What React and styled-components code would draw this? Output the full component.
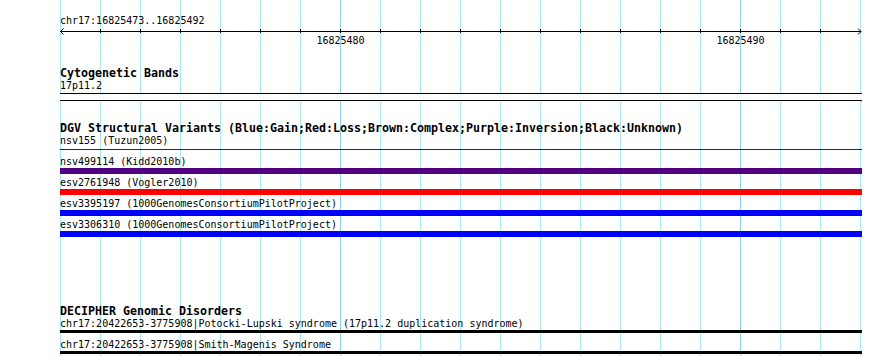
import React from 'react'
import styled, { createGlobalStyle } from 'styled-components'

const GlobalStyle = createGlobalStyle`
  html, body {
    margin: 0;
    padding: 0;
    background: #ffffff;
  }
  body {
    font-family: 'DejaVu Sans Mono', 'Liberation Mono', monospace;
    color: #000000;
  }
`

const GRID = '#a8e8f0'
const GRID_DARK = '#88d2ee'

const Page = styled.div`
  display: flex;
  width: 890px;
  height: 356px;
  padding-left: 60px;
  box-sizing: border-box;
  overflow: hidden;
`

const Tracks = styled.div`
  width: 802px;
  height: 356px;
  display: flex;
  flex-direction: column;
  overflow: hidden;
  background-color: #ffffff;
  background-image:
    linear-gradient(to right, transparent 280px, ${GRID_DARK} 280px, ${GRID_DARK} 281px, transparent 281px),
    linear-gradient(to right, transparent 680px, ${GRID_DARK} 680px, ${GRID_DARK} 681px, transparent 681px),
    repeating-linear-gradient(to right, ${GRID} 0, ${GRID} 1px, transparent 1px, transparent 40px);
  background-size: 802px 100%, 802px 100%, 801px 100%;
  background-repeat: no-repeat;

  & > * {
    flex-shrink: 0;
  }
`

const PositionLabel = styled.div`
  margin-top: 15px;
  height: 12px;
  font-size: 10px;
  line-height: 12px;
  white-space: pre;
`

const RulerSvg = styled.svg`
  display: block;
  width: 802px;
  height: 8px;
`

const TickLabels = styled.div`
  position: relative;
  height: 12px;
`

const TickLabel = styled.span`
  position: absolute;
  top: 0;
  transform: translateX(-50%);
  font-size: 10px;
  line-height: 12px;
  white-space: pre;
`

const TrackTitle = styled.div`
  margin-top: ${({ $top }) => $top}px;
  height: 13px;
  font-size: 11.63px;
  font-weight: 700;
  line-height: 13px;
  white-space: pre;
`

const ItemLabel = styled.div`
  height: 12px;
  font-size: 10px;
  line-height: 12px;
  white-space: pre;
`

const Band = styled.div`
  margin-top: 1px;
  height: 6px;
  background: #ffffff;
  border-top: 1px solid #000000;
  border-bottom: 1px solid #000000;
`

const ItemRow = styled.div`
  display: flex;
  flex-direction: column;
  height: 21px;
`

const ItemBar = styled.div`
  height: ${({ $h }) => $h}px;
  margin-top: ${({ $mt }) => $mt || 0}px;
  background: ${({ $color }) => $color};
`

const ticks = Array.from({ length: 19 }, (_, i) => (i + 1) * 40)

function Ruler() {
  return (
    <RulerSvg width="802" height="8" viewBox="0 0 802 8">
      <line x1="0.5" y1="4.5" x2="801" y2="4.5" stroke="#000" strokeWidth="1" />
      {ticks.map((x) => (
        <line key={x} x1={x + 0.5} y1="2" x2={x + 0.5} y2="6" stroke="#000" strokeWidth="1" />
      ))}
      <polyline points="3.5,1.5 0.5,4.5 3.5,7.5" fill="none" stroke="#000" strokeWidth="1" />
      <polyline points="798,1.5 801,4.5 798,7.5" fill="none" stroke="#000" strokeWidth="1" />
    </RulerSvg>
  )
}

const dgvItems = [
  { name: 'nsv155 (Tuzun2005)', color: '#4a0a78', h: 1, mt: 2 },
  { name: 'nsv499114 (Kidd2010b)', color: '#500080', h: 6 },
  { name: 'esv2761948 (Vogler2010)', color: '#ff0000', h: 6 },
  { name: 'esv3395197 (1000GenomesConsortiumPilotProject)', color: '#0000ff', h: 6 },
  { name: 'esv3306310 (1000GenomesConsortiumPilotProject)', color: '#0000ff', h: 6 },
]

const decipherItems = [
  'chr17:20422653-3775908|Potocki-Lupski syndrome (17p11.2 duplication syndrome)',
  'chr17:20422653-3775908|Smith-Magenis Syndrome',
]

export default function App() {
  return (
    <>
      <GlobalStyle />
      <Page>
        <Tracks>
          <PositionLabel>chr17:16825473..16825492</PositionLabel>
          <Ruler />
          <TickLabels>
            <TickLabel style={{ left: 280.5 }}>16825480</TickLabel>
            <TickLabel style={{ left: 680.5 }}>16825490</TickLabel>
          </TickLabels>

          <TrackTitle $top={20}>Cytogenetic Bands</TrackTitle>
          <ItemLabel>17p11.2</ItemLabel>
          <Band />

          <TrackTitle $top={21}>
            DGV Structural Variants (Blue:Gain;Red:Loss;Brown:Complex;Purple:Inversion;Black:Unknown)
          </TrackTitle>
          {dgvItems.map((item) => (
            <ItemRow key={item.name}>
              <ItemLabel>{item.name}</ItemLabel>
              <ItemBar $color={item.color} $h={item.h} $mt={item.mt} />
            </ItemRow>
          ))}

          <TrackTitle $top={65}>DECIPHER Genomic Disorders</TrackTitle>
          {decipherItems.map((name) => (
            <ItemRow key={name}>
              <ItemLabel>{name}</ItemLabel>
              <ItemBar $color="#000000" $h={3} />
            </ItemRow>
          ))}
        </Tracks>
      </Page>
    </>
  )
}
